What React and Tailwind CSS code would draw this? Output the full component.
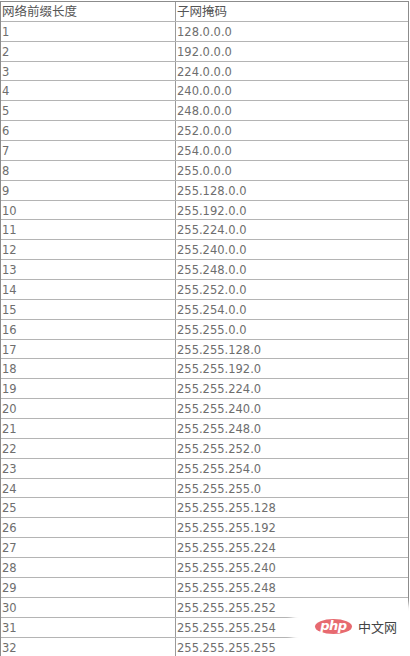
import React from "react";

const masks = [
  "128.0.0.0","192.0.0.0","224.0.0.0","240.0.0.0","248.0.0.0","252.0.0.0","254.0.0.0","255.0.0.0",
  "255.128.0.0","255.192.0.0","255.224.0.0","255.240.0.0","255.248.0.0","255.252.0.0","255.254.0.0","255.255.0.0",
  "255.255.128.0","255.255.192.0","255.255.224.0","255.255.240.0","255.255.248.0","255.255.252.0","255.255.254.0","255.255.255.0",
  "255.255.255.128","255.255.255.192","255.255.255.224","255.255.255.240","255.255.255.248","255.255.255.252","255.255.255.254","255.255.255.255",
];

export default function App() {
  return (
    <div className="relative w-[410px] h-[656px] overflow-hidden bg-white pt-px">
      <div className="w-[409px] border border-[#8c8c8c] border-b-0">
        <div className="flex h-[19.87px] border-b border-[#b4b4b4]">
          <div className="w-[175px] border-r border-[#9a9a9a] pl-px text-[12.5px] leading-[18px] text-[#555] [font-family:'Noto_Sans_CJK_SC',sans-serif]">
            网络前缀长度
          </div>
          <div className="flex-1 pl-px text-[12.5px] leading-[18px] text-[#555] [font-family:'Noto_Sans_CJK_SC',sans-serif]">
            子网掩码
          </div>
        </div>
        {masks.map((m, i) => (
          <div key={i} className="flex h-[19.87px] border-b border-[#b4b4b4] text-[11.5px] text-[#6e6e6e] [font-family:'DejaVu_Sans',sans-serif]">
            <div className="w-[175px] border-r border-[#9a9a9a] pl-px pt-[2px] leading-[16px]">{i + 1}</div>
            <div className="flex-1 pl-px pt-[2px] leading-[16px]">{m}</div>
          </div>
        ))}
      </div>
      <div className="absolute left-[292px] top-[604px] w-[130px] h-[60px] rounded-[10px] bg-white blur-[3px]" />
      <div className="absolute left-[315px] top-[619px] flex items-center gap-[6px]">
        <div className="w-[37px] h-[15px] rounded-[50%] bg-[#e76a70] flex items-center justify-center">
          <span className="text-white italic font-bold text-[13px] leading-none -mt-[2px] [font-family:'DejaVu_Sans',sans-serif] tracking-[-0.5px]">php</span>
        </div>
        <span className="text-[13px] leading-none text-[#444] [font-family:'Noto_Sans_CJK_SC',sans-serif]">中文网</span>
      </div>
    </div>
  );
}
